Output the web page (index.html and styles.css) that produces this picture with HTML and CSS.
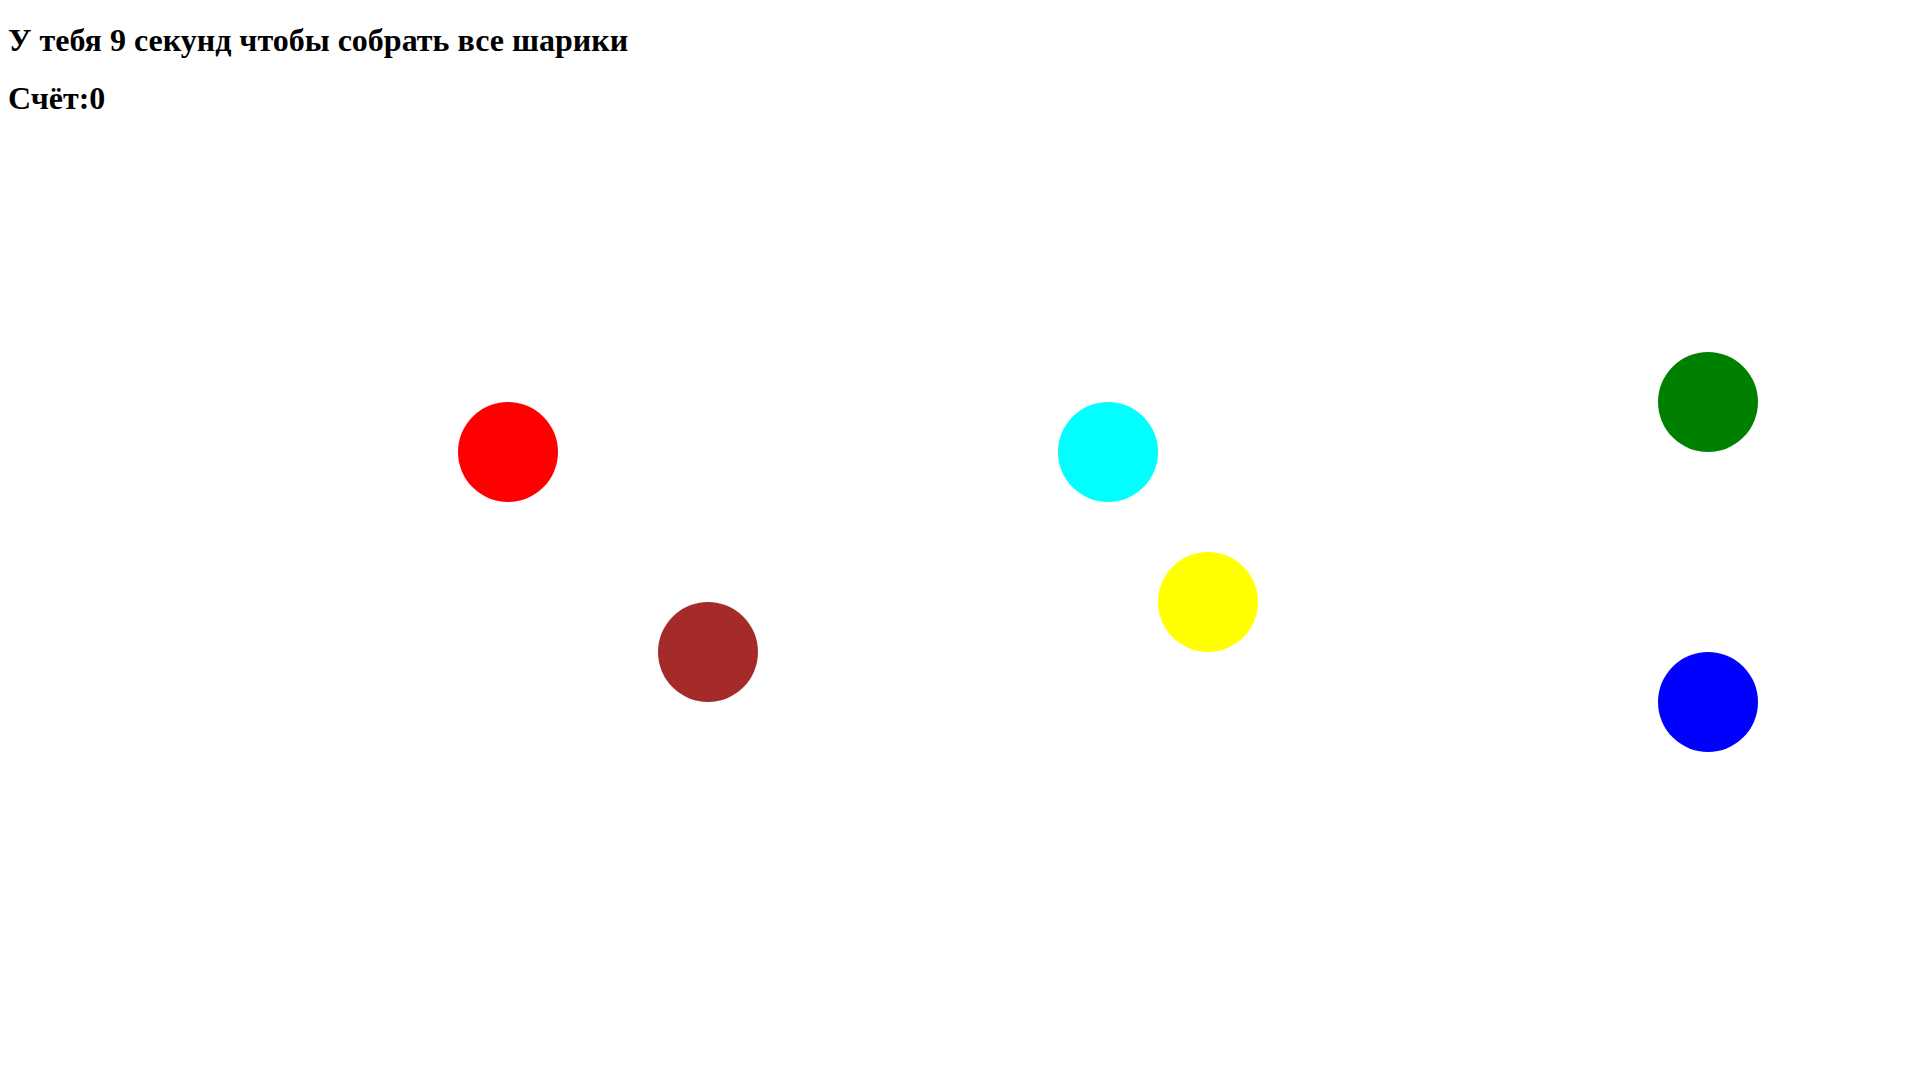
FILE: index.html
```html
<!DOCTYPE html>
<html lang="ru">
<head>
<meta charset="utf-8">
<title>Шарики</title>
<link rel="stylesheet" href="styles.css">
</head>
<body>
<h1 class="title">У тебя 9 секунд чтобы собрать все шарики</h1>
<h1 class="score">Счёт:0</h1>
<div class="field">
  <div class="ball red" style="left:450px;top:394px"></div>
  <div class="ball brown" style="left:650px;top:594px"></div>
  <div class="ball cyan" style="left:1050px;top:394px"></div>
  <div class="ball yellow" style="left:1150px;top:544px"></div>
  <div class="ball green" style="left:1650px;top:344px"></div>
  <div class="ball blue" style="left:1650px;top:644px"></div>
</div>
</body>
</html>
```
FILE: styles.css
```css
html, body {
  background: #ffffff;
}
body {
  margin: 8px;
  font-family: "Liberation Serif", "Times New Roman", serif;
  color: #000000;
}
.title, .score {
  font-size: 32px;
  font-weight: bold;
  line-height: 37px;
}
.title {
  margin: 14px 0 0;
}
.score {
  margin: 21px 0 0;
}
.field {
  position: absolute;
  left: 8px;
  top: 8px;
  width: 1904px;
  height: 1064px;
  pointer-events: none;
}
.ball {
  position: absolute;
  width: 100px;
  height: 100px;
  border-radius: 50%;
}
.red { background: red; }
.brown { background: brown; }
.cyan { background: cyan; }
.yellow { background: yellow; }
.green { background: green; }
.blue { background: blue; }
```
